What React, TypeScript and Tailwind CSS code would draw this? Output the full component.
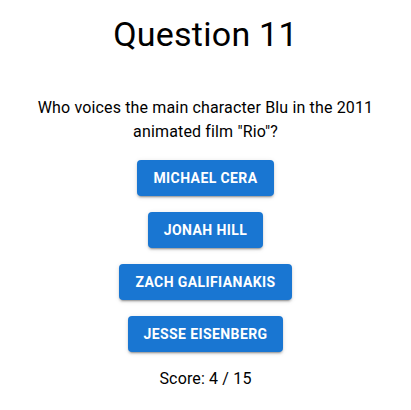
import React from "react";

const answers = ["Michael Cera", "Jonah Hill", "Zach Galifianakis", "Jesse Eisenberg"];

export default function App() {
  return (
    <div
      className="flex flex-col items-center bg-white text-center text-black"
      style={{ fontFamily: "Roboto, 'Helvetica', Arial, sans-serif" }}
    >
      <h1 className="mt-[13px] text-[34px] font-normal leading-[42px] tracking-[0.25px]">Question 11</h1>
      <p className="mx-auto mt-[41px] max-w-[350px] text-[16px] leading-[24px] tracking-[0.15px]">
        Who voices the main character Blu in the 2011 animated film "Rio"?
      </p>
      <div className="mt-[16px] flex flex-col items-center gap-[16px]">
        {answers.map((a) => (
          <button
            key={a}
            className="h-[36px] rounded-[4px] bg-[#1976d2] px-[16px] text-[14px] font-bold uppercase leading-[24px] tracking-[0.4px] text-white shadow-[0px_3px_1px_-2px_rgba(0,0,0,0.2),0px_2px_2px_0px_rgba(0,0,0,0.14),0px_1px_5px_0px_rgba(0,0,0,0.12)]"
          >
            {a}
          </button>
        ))}
      </div>
      <p className="mt-[15px] text-[16px] leading-[24px] tracking-[0.15px]">Score: 4 / 15</p>
    </div>
  );
}
